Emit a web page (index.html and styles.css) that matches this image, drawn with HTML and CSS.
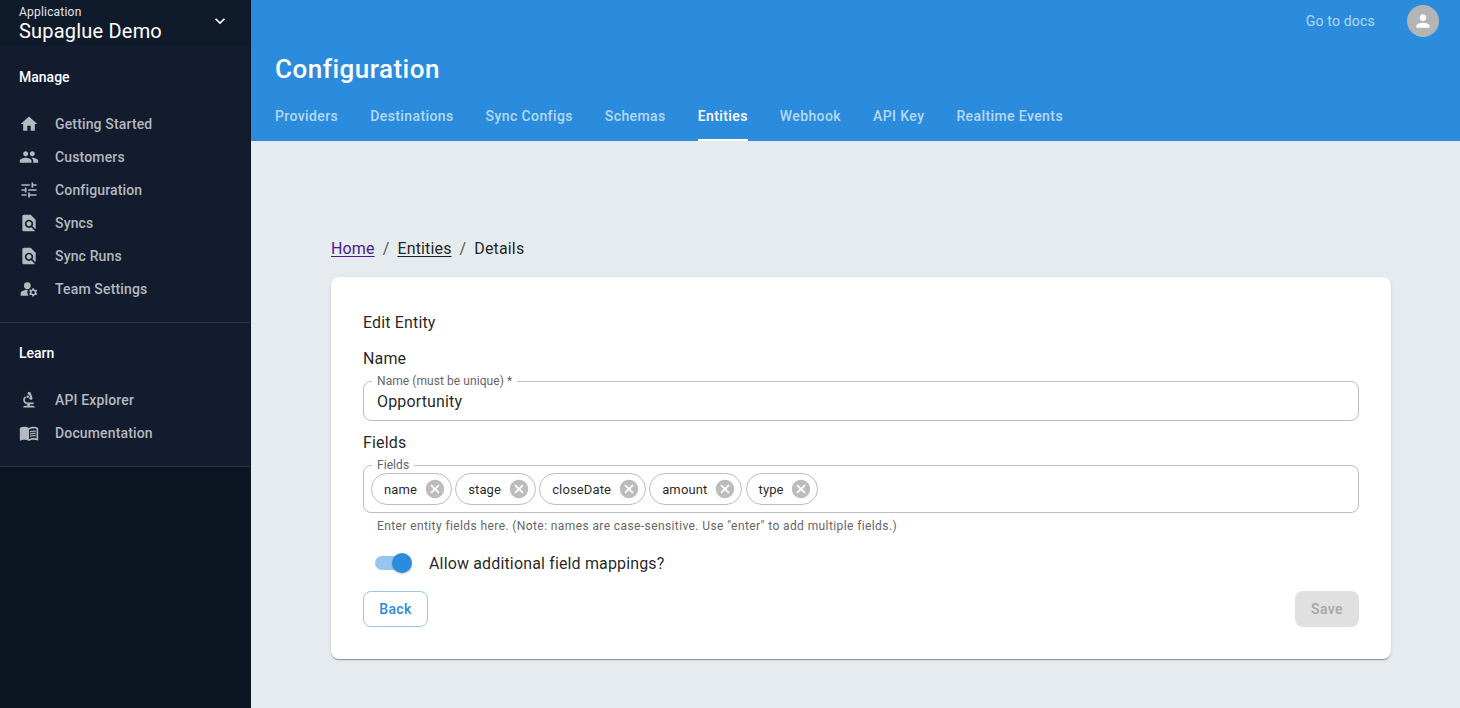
FILE: index.html
```html
<!DOCTYPE html>
<html lang="en">
<head>
<meta charset="utf-8">
<title>Configuration</title>
<link rel="stylesheet" href="styles.css">
</head>
<body>
<div class="app">
  <aside class="sidebar">
    <div class="app-switch">
      <div>
        <div class="app-label">Application</div>
        <div class="app-name">Supaglue Demo</div>
      </div>
      <svg class="chev" viewBox="0 0 24 24"><path d="M7.41 8.59 12 13.17l4.59-4.58L18 10l-6 6-6-6 1.41-1.41z"/></svg>
    </div>
    <section class="nav-section manage">
      <h2 class="nav-title">Manage</h2>
      <ul class="nav-list">
        <li class="nav-item"><svg viewBox="0 0 24 24"><path d="M10 20v-6h4v6h5v-8h3L12 3 2 12h3v8z"/></svg>Getting Started</li>
        <li class="nav-item"><svg viewBox="0 0 24 24"><path d="M16 11c1.66 0 2.99-1.34 2.99-3S17.66 5 16 5c-1.66 0-3 1.34-3 3s1.34 3 3 3zm-8 0c1.66 0 2.99-1.34 2.99-3S9.66 5 8 5C6.34 5 5 6.34 5 8s1.34 3 3 3zm0 2c-2.33 0-7 1.17-7 3.5V19h14v-2.5c0-2.33-4.67-3.5-7-3.5zm8 0c-.29 0-.62.02-.97.05 1.16.84 1.97 1.97 1.97 3.45V19h6v-2.5c0-2.33-4.67-3.5-7-3.5z"/></svg>Customers</li>
        <li class="nav-item"><svg viewBox="0 0 24 24"><path d="M3 17v2h6v-2H3zM3 5v2h10V5H3zm10 16v-2h8v-2h-8v-2h-2v6h2zM7 9v2H3v2h4v2h2V9H7zm14 4v-2H11v2h10zm-6-4h2V7h4V5h-4V3h-2v6z"/></svg>Configuration</li>
        <li class="nav-item"><svg viewBox="0 0 24 24"><path d="M20 19.59V8l-6-6H6c-1.1 0-1.99.9-1.99 2L4 20c0 1.1.89 2 1.99 2H18c.45 0 .85-.15 1.19-.4l-4.43-4.43c-.8.52-1.74.83-2.76.83-2.76 0-5-2.24-5-5s2.24-5 5-5 5 2.24 5 5c0 1.02-.31 1.96-.83 2.75L20 19.59zM9 13c0 1.66 1.34 3 3 3s3-1.34 3-3-1.34-3-3-3-3 1.34-3 3z"/></svg>Syncs</li>
        <li class="nav-item"><svg viewBox="0 0 24 24"><path d="M20 19.59V8l-6-6H6c-1.1 0-1.99.9-1.99 2L4 20c0 1.1.89 2 1.99 2H18c.45 0 .85-.15 1.19-.4l-4.43-4.43c-.8.52-1.74.83-2.76.83-2.76 0-5-2.24-5-5s2.24-5 5-5 5 2.24 5 5c0 1.02-.31 1.96-.83 2.75L20 19.59zM9 13c0 1.66 1.34 3 3 3s3-1.34 3-3-1.34-3-3-3-3 1.34-3 3z"/></svg>Sync Runs</li>
        <li class="nav-item"><svg viewBox="0 0 24 24"><circle cx="10" cy="8" r="4"/><path d="M10.67 13.02c-.22-.01-.44-.02-.67-.02-2.42 0-4.68.67-6.61 1.82-.88.52-1.39 1.5-1.39 2.53V20h9.26c-.79-1.13-1.26-2.51-1.26-4 0-1.07.25-2.07.67-2.98zM20.75 16c0-.22-.03-.42-.06-.63l1.14-1.01-1-1.73-1.45.49c-.32-.27-.68-.48-1.08-.63L18 11h-2l-.3 1.49c-.4.15-.76.36-1.08.63l-1.45-.49-1 1.73 1.14 1.01c-.03.21-.06.41-.06.63s.03.42.06.63l-1.14 1.01 1 1.73 1.45-.49c.32.27.68.48 1.08.63L16 21h2l.3-1.49c.4-.15.76-.36 1.08-.63l1.45.49 1-1.73-1.14-1.01c.03-.21.06-.41.06-.63zM17 18c-1.1 0-2-.9-2-2s.9-2 2-2 2 .9 2 2-.9 2-2 2z"/></svg>Team Settings</li>
      </ul>
    </section>
    <section class="nav-section learn">
      <h2 class="nav-title">Learn</h2>
      <ul class="nav-list">
        <li class="nav-item"><svg viewBox="0 0 24 24"><path d="M7 19c-1.1 0-2 .9-2 2h14c0-1.1-.9-2-2-2h-4v-2h3c1.1 0 2-.9 2-2h-8c-1.66 0-3-1.34-3-3 0-1.09.59-2.04 1.46-2.56C8.17 9.03 8 8.54 8 8c0-.21.04-.42.09-.62C6.28 8.13 5 9.92 5 12c0 2.76 2.24 5 5 5v2H7zM10.56 5.51C11.91 5.54 13 6.64 13 8c0 .75-.33 1.41-.85 1.87l.59 1.62.94-.34.34.94 1.88-.68-.34-.94.94-.34-2.74-7.52-.94.34-.34-.94-1.88.68.34.94-.94.35.56 1.53z"/><circle cx="10.5" cy="8" r="1.5"/></svg>API Explorer</li>
        <li class="nav-item"><svg viewBox="0 0 24 24"><path d="M21 5c-1.11-.35-2.33-.5-3.5-.5-1.95 0-4.05.4-5.5 1.5-1.45-1.1-3.55-1.5-5.5-1.5S2.45 4.9 1 6v14.65c0 .25.25.5.5.5.1 0 .15-.05.25-.05C3.1 20.45 5.05 20 6.5 20c1.95 0 4.05.4 5.5 1.5 1.35-.85 3.8-1.5 5.5-1.5 1.65 0 3.35.3 4.75 1.05.1.05.15.05.25.05.25 0 .5-.25.5-.5V6c-.6-.45-1.25-.75-2-1zm0 13.5c-1.1-.35-2.3-.5-3.5-.5-1.7 0-4.15.65-5.5 1.5V8c1.35-.85 3.8-1.5 5.5-1.5 1.2 0 2.4.15 3.5.5v11.5z"/><path d="M17.5 10.5c.88 0 1.73.09 2.5.26V9.24c-.79-.15-1.64-.24-2.5-.24-1.7 0-3.24.29-4.5.83v1.66c1.13-.64 2.7-.99 4.5-.99zM13 12.49v1.66c1.13-.64 2.7-.99 4.5-.99.88 0 1.73.09 2.5.26V11.9c-.79-.15-1.64-.24-2.5-.24-1.7 0-3.24.3-4.5.83zM17.5 14.33c-1.7 0-3.24.29-4.5.83v1.66c1.13-.64 2.7-.99 4.5-.99.88 0 1.73.09 2.5.26v-1.52c-.79-.16-1.64-.24-2.5-.24z"/></svg>Documentation</li>
      </ul>
    </section>
  </aside>
  <div class="main">
    <header class="header">
      <div class="topbar">
        <span class="docs">Go to docs</span>
        <span class="avatar"><svg viewBox="0 0 24 24"><path d="M12 12c2.21 0 4-1.79 4-4s-1.79-4-4-4-4 1.79-4 4 1.79 4 4 4zm0 2c-2.67 0-8 1.34-8 4v2h16v-2c0-2.66-5.33-4-8-4z"/></svg></span>
      </div>
      <h1 class="page-title">Configuration</h1>
      <nav class="tabs">
        <span class="tab">Providers</span>
        <span class="tab">Destinations</span>
        <span class="tab">Sync Configs</span>
        <span class="tab">Schemas</span>
        <span class="tab active">Entities</span>
        <span class="tab">Webhook</span>
        <span class="tab">API Key</span>
        <span class="tab">Realtime Events</span>
      </nav>
    </header>
    <main class="content">
      <nav class="crumbs">
        <a class="crumb-visited" href="#">Home</a><span class="sep">/</span><a class="crumb-link" href="#">Entities</a><span class="sep">/</span><span>Details</span>
      </nav>
      <form class="card">
        <div class="card-title">Edit Entity</div>
        <div class="field-title name-title">Name</div>
        <div class="outlined name-box">
          <span class="float-label">Name (must be unique) *</span>
          <span class="value">Opportunity</span>
        </div>
        <div class="field-title fields-title">Fields</div>
        <div class="outlined chips-box">
          <span class="float-label">Fields</span>
          <span class="chip">name<svg viewBox="0 0 24 24"><path d="M12 2C6.47 2 2 6.47 2 12s4.47 10 10 10 10-4.47 10-10S17.53 2 12 2zm5 13.59L15.59 17 12 13.41 8.41 17 7 15.59 10.59 12 7 8.41 8.41 7 12 10.59 15.59 7 17 8.41 13.41 12 17 15.59z"/></svg></span>
          <span class="chip">stage<svg viewBox="0 0 24 24"><path d="M12 2C6.47 2 2 6.47 2 12s4.47 10 10 10 10-4.47 10-10S17.53 2 12 2zm5 13.59L15.59 17 12 13.41 8.41 17 7 15.59 10.59 12 7 8.41 8.41 7 12 10.59 15.59 7 17 8.41 13.41 12 17 15.59z"/></svg></span>
          <span class="chip">closeDate<svg viewBox="0 0 24 24"><path d="M12 2C6.47 2 2 6.47 2 12s4.47 10 10 10 10-4.47 10-10S17.53 2 12 2zm5 13.59L15.59 17 12 13.41 8.41 17 7 15.59 10.59 12 7 8.41 8.41 7 12 10.59 15.59 7 17 8.41 13.41 12 17 15.59z"/></svg></span>
          <span class="chip">amount<svg viewBox="0 0 24 24"><path d="M12 2C6.47 2 2 6.47 2 12s4.47 10 10 10 10-4.47 10-10S17.53 2 12 2zm5 13.59L15.59 17 12 13.41 8.41 17 7 15.59 10.59 12 7 8.41 8.41 7 12 10.59 15.59 7 17 8.41 13.41 12 17 15.59z"/></svg></span>
          <span class="chip">type<svg viewBox="0 0 24 24"><path d="M12 2C6.47 2 2 6.47 2 12s4.47 10 10 10 10-4.47 10-10S17.53 2 12 2zm5 13.59L15.59 17 12 13.41 8.41 17 7 15.59 10.59 12 7 8.41 8.41 7 12 10.59 15.59 7 17 8.41 13.41 12 17 15.59z"/></svg></span>
        </div>
        <p class="helper">Enter entity fields here. (Note: names are case-sensitive. Use "enter" to add multiple fields.)</p>
        <div class="switch-row">
          <span class="switch"><span class="track"></span><span class="thumb"></span></span>
          <span class="switch-label">Allow additional field mappings?</span>
        </div>
        <div class="actions">
          <span class="btn btn-back">Back</span>
          <span class="btn btn-save">Save</span>
        </div>
      </form>
    </main>
  </div>
</div>
</body>
</html>
```

FILE: styles.css
```css
* { box-sizing: border-box; }
html, body { margin: 0; height: 100%; overflow: hidden; }
body { font-family: Roboto, "Liberation Sans", sans-serif; color: rgba(0,0,0,.87); background: #e6ebef; }
.app { display: flex; height: 708px; }

.sidebar { width: 251px; flex: none; background: #0d1421; border-right: 1px solid #0d1421; color: #fff; }
.app-switch { height: 46px; background: #0f1a2b; display: flex; justify-content: space-between; padding: 5px 20px 0 19px; }
.app-label { font-size: 12px; line-height: 14px; color: #e3e5e8; letter-spacing: .2px; }
.app-name { font-size: 20px; line-height: 24px; letter-spacing: .2px; }
.chev { width: 20px; height: 20px; fill: #fff; margin: 6px 0 0; }
.nav-section { background: #121c2e; border-bottom: 1px solid #2c3442; }
.manage { height: 277px; padding-top: 22px; }
.learn { height: 144px; padding-top: 21px; }
.nav-title { margin: 0 0 21px; padding-left: 19px; font-size: 14px; line-height: 18px; font-weight: 500; }
.nav-list { list-style: none; margin: 0; padding: 0; }
.nav-item { height: 33px; display: flex; align-items: center; padding-left: 19px; font-size: 14px; font-weight: 500; color: #b4b8bf; letter-spacing: .15px; }
.nav-item svg { width: 20px; height: 20px; fill: #b4b8bf; margin-right: 16px; flex: none; }

.main { flex: 1; min-width: 0; display: flex; flex-direction: column; }
.header { height: 141px; background: #2b8cde; padding: 0 21px 0 24px; color: #fff; }
.topbar { height: 41px; display: flex; justify-content: flex-end; align-items: center; gap: 32px; }
.docs { font-size: 14px; color: #b5d8f5; letter-spacing: .2px; }
.avatar { width: 32px; height: 32px; border-radius: 50%; background: #b4b4b4; display: flex; align-items: center; justify-content: center; }
.avatar svg { width: 20px; height: 20px; fill: #fff; }
.page-title { margin: 10px 0 0; font-size: 26px; line-height: 36px; font-weight: 500; letter-spacing: .5px; }
.tabs { display: flex; gap: 32px; margin-top: 13px; }
.tab { height: 41px; padding-top: 7px; font-size: 14px; line-height: 18px; font-weight: 500; letter-spacing: .4px; color: #b5d8f5; }
.tab.active { color: #fff; border-bottom: 2px solid #fff; }

.content { flex: 1; padding: 98px 0 0 80px; background: #e6ebef; }
.crumbs { display: flex; height: 20px; align-items: center; font-size: 16px; line-height: 20px; letter-spacing: .15px; }
.crumbs a { text-underline-offset: 2px; }
.crumb-visited { color: #4a1a8c; }
.crumb-link { color: rgba(0,0,0,.87); }
.sep { margin: 0 8px; color: #555; }
.card { width: 1060px; height: 382px; margin-top: 18px; padding: 32px; background: #fff; border-radius: 8px; box-shadow: 0 2px 1px -1px rgba(0,0,0,.2), 0 1px 1px rgba(0,0,0,.14), 0 1px 3px rgba(0,0,0,.12); }
.card-title { font-size: 16px; line-height: 28px; height: 28px; letter-spacing: .15px; }
.field-title { font-size: 16px; line-height: 24px; letter-spacing: .15px; }
.name-title { margin-top: 10px; }
.fields-title { margin-top: 10px; }
.outlined { position: relative; width: 996px; border: 1px solid #bdbdbd; border-radius: 8px; }
.name-box { height: 40px; margin-top: 10px; padding: 8px 13px 0; font-size: 16px; line-height: 24px; letter-spacing: .15px; }
.float-label { position: absolute; top: -8px; left: 8px; padding: 0 5px; background: #fff; font-size: 12px; line-height: 14px; color: #666; letter-spacing: .07px; }
.chips-box { height: 48px; margin-top: 10px; padding: 7px; display: flex; gap: 3.6px; }
.chip { height: 32px; border: 1px solid #bdbdbd; border-radius: 16px; display: flex; align-items: center; padding-left: 12px; padding-right: 5px; font-size: 13px; letter-spacing: .13px; gap: 6.5px; }
.chip svg { width: 22px; height: 22px; fill: #bcbcbc; flex: none; }
.helper { margin: 5px 0 0 14px; font-size: 12px; line-height: 16px; color: #666; letter-spacing: .4px; }
.switch-row { display: flex; align-items: center; margin-top: 10px; height: 38px; }
.switch { position: relative; width: 37px; height: 20px; margin-left: 12px; margin-right: 17px; }
.track { position: absolute; left: 0; top: 3px; width: 34px; height: 14px; border-radius: 7px; background: #95c6ef; }
.thumb { position: absolute; right: 0; top: 0; width: 20px; height: 20px; border-radius: 50%; background: #2b8cde; box-shadow: 0 1px 2px rgba(0,0,0,.25); }
.switch-label { font-size: 16px; letter-spacing: .15px; }
.actions { display: flex; justify-content: space-between; width: 996px; margin-top: 9px; }
.btn { height: 36px; border-radius: 8px; font-size: 14px; font-weight: 500; display: flex; align-items: center; justify-content: center; letter-spacing: .4px; }
.btn-back { width: 65px; border: 1px solid #95c6ef; color: #2b8cde; }
.btn-save { width: 64px; background: #e0e0e0; color: #a6a6a6; }
```
